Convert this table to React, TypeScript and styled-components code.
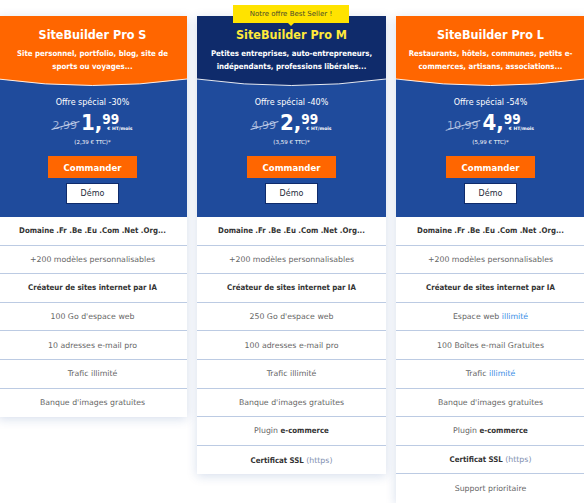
import styled, { createGlobalStyle } from 'styled-components';

const GlobalStyle = createGlobalStyle`
	html, body {
		margin: 0;
		padding: 0;
		background: #ffffff;
		font-family: "DejaVu Sans", "Noto Sans", sans-serif;
		overflow: hidden;
	}
`;

const ORANGE = '#ff6600';
const BLUE = '#1f4b9c';
const NAVY = '#0f2b6b';
// police grasse plus étroite, pour se rapprocher des largeurs de l'original
const BOLD_FONT = '"DejaVu Sans Condensed", "DejaVu Sans", sans-serif';

type Feature = { parts: { text: string; kind?: 'bold' | 'blue' | 'soft' }[]; bold?: boolean };

type Plan = {
	name: string;
	desc: string;
	offer: string;
	oldPrice: string;
	euros: string;
	cents: string;
	ttc: string;
	featured?: boolean;
	features: Feature[];
};

const common: Feature[] = [
	{ parts: [{ text: 'Domaine .Fr .Be .Eu .Com .Net .Org...' }], bold: true },
	{ parts: [{ text: '+200 modèles personnalisables' }] },
	{ parts: [{ text: 'Créateur de sites internet par IA' }], bold: true },
];

const plans: Plan[] = [
	{
		name: 'SiteBuilder Pro S',
		desc: 'Site personnel, portfolio, blog, site de sports ou voyages...',
		offer: 'Offre spécial -30%',
		oldPrice: '2,99',
		euros: '1,',
		cents: '99',
		ttc: '(2,39 € TTC)*',
		features: [
			...common,
			{ parts: [{ text: "100 Go d'espace web" }] },
			{ parts: [{ text: '10 adresses e-mail pro' }] },
			{ parts: [{ text: 'Trafic illimité' }] },
			{ parts: [{ text: "Banque d'images gratuites" }] },
		],
	},
	{
		name: 'SiteBuilder Pro M',
		desc: 'Petites entreprises, auto-entrepreneurs, indépendants, professions libérales...',
		offer: 'Offre spécial -40%',
		oldPrice: '4,99',
		euros: '2,',
		cents: '99',
		ttc: '(3,59 € TTC)*',
		featured: true,
		features: [
			...common,
			{ parts: [{ text: "250 Go d'espace web" }] },
			{ parts: [{ text: '100 adresses e-mail pro' }] },
			{ parts: [{ text: 'Trafic illimité' }] },
			{ parts: [{ text: "Banque d'images gratuites" }] },
			{ parts: [{ text: 'Plugin ' }, { text: 'e-commerce', kind: 'bold' }] },
			{ parts: [{ text: 'Certificat SSL', kind: 'bold' }, { text: ' (https)', kind: 'soft' }] },
		],
	},
	{
		name: 'SiteBuilder Pro L',
		desc: 'Restaurants, hôtels, communes, petits e-commerces, artisans, associations...',
		offer: 'Offre spécial -54%',
		oldPrice: '10,99',
		euros: '4,',
		cents: '99',
		ttc: '(5,99 € TTC)*',
		features: [
			...common,
			{ parts: [{ text: 'Espace web ' }, { text: 'illimité', kind: 'blue' }] },
			{ parts: [{ text: '100 Boîtes e-mail Gratuites' }] },
			{ parts: [{ text: 'Trafic ' }, { text: 'illimité', kind: 'blue' }] },
			{ parts: [{ text: "Banque d'images gratuites" }] },
			{ parts: [{ text: 'Plugin ' }, { text: 'e-commerce', kind: 'bold' }] },
			{ parts: [{ text: 'Certificat SSL', kind: 'bold' }, { text: ' (https)', kind: 'soft' }] },
			{ parts: [{ text: 'Support prioritaire' }] },
		],
	},
];

function App() {
	return (
		<>
			<GlobalStyle />
			<Page>
				{plans.map((plan) => (
					<Card key={plan.name}>
						{plan.featured && <Badge>Notre offre Best Seller !</Badge>}
						<Header $featured={!!plan.featured}>
							<Title $featured={!!plan.featured}>{plan.name}</Title>
							<Desc>{plan.desc}</Desc>
						</Header>
						{/* bas du header en forme de vague */}
						<Wave viewBox="0 0 189 10" preserveAspectRatio="none">
							<path d="M0 0 L0 1 Q94.5 14 189 1 L189 0 Z" fill={plan.featured ? NAVY : ORANGE} />
							<path d="M0 1 Q94.5 14 189 1" fill="none" stroke="#ffffff" strokeWidth="0.9" />
						</Wave>
						<Body>
							<Offer>{plan.offer}</Offer>
							<PriceRow>
								<OldPrice>{plan.oldPrice}</OldPrice>
								<Euros>{plan.euros}</Euros>
								<PriceSide>
									<Cents>{plan.cents}</Cents>
									<Unit>€ HT/mois</Unit>
								</PriceSide>
							</PriceRow>
							<Ttc>{plan.ttc}</Ttc>
							<OrderButton>Commander</OrderButton>
							<DemoButton>Démo</DemoButton>
						</Body>
						<FeatureList>
							{plan.features.map((f, i) => (
								<FeatureRow key={`${plan.name}-${i}`} $bold={!!f.bold}>
									{f.parts.map((p, j) => (
										<Part key={j} $kind={p.kind}>
											{p.text}
										</Part>
									))}
								</FeatureRow>
							))}
						</FeatureList>
					</Card>
				))}
			</Page>
		</>
	);
}

const Page = styled.div`
	display: flex;
	align-items: flex-start;
	gap: 10px;
	margin-left: -2px;
	padding-top: 16px;
	width: 600px;
`;

const Card = styled.div`
	position: relative;
	display: flex;
	flex-direction: column;
	width: 189px;
	flex-shrink: 0;
	background: #ffffff;
	box-shadow: 0 2px 10px rgba(30, 70, 150, 0.18);
`;

const Badge = styled.div`
	position: absolute;
	top: -11px;
	left: 36px;
	width: 116px;
	height: 18px;
	display: flex;
	align-items: center;
	justify-content: center;
	background: #ffe300;
	color: #4a4a2a;
	font-size: 7px;
	z-index: 2;

	&::after {
		content: '';
		position: absolute;
		bottom: -3px;
		left: 50%;
		margin-left: -3px;
		border-left: 3px solid transparent;
		border-right: 3px solid transparent;
		border-top: 3px solid #ffe300;
	}
`;

const Header = styled.div<{ $featured: boolean }>`
	height: 62px;
	box-sizing: border-box;
	padding: 11px 10px 0;
	text-align: center;
	color: #ffffff;
	background: ${({ $featured }) => ($featured ? NAVY : ORANGE)};
`;

const Title = styled.div<{ $featured: boolean }>`
	font-family: ${BOLD_FONT};
	font-size: 12.5px;
	font-weight: 700;
	line-height: 16px;
	color: ${({ $featured }) => ($featured ? '#ffe93a' : '#ffffff')};
`;

const Desc = styled.div`
	margin-top: 4px;
	font-family: ${BOLD_FONT};
	font-size: 7.8px;
	font-weight: 700;
	line-height: 13px;
`;

const Wave = styled.svg`
	display: block;
	width: 100%;
	height: 10px;
	background: ${BLUE};
`;

const Body = styled.div`
	display: flex;
	flex-direction: column;
	align-items: center;
	height: 129px;
	box-sizing: border-box;
	padding-top: 10px;
	background: ${BLUE};
	color: #ffffff;
`;

const Offer = styled.div`
	font-size: 8px;
	line-height: 10px;
`;

const PriceRow = styled.div`
	display: flex;
	align-items: flex-start;
	margin-top: 4px;
	height: 22px;
`;

const OldPrice = styled.span`
	position: relative;
	align-self: center;
	margin-right: 4px;
	margin-top: 4px;
	font-size: 11px;
	color: #9fb2d8;

	&::after {
		content: '';
		position: absolute;
		left: -2px;
		right: -2px;
		top: 50%;
		height: 1px;
		background: #c8d4ec;
		transform: rotate(-16deg);
	}
`;

const Euros = styled.span`
	font-family: ${BOLD_FONT};
	font-size: 22px;
	font-weight: 700;
	line-height: 22px;
`;

const PriceSide = styled.div`
	display: flex;
	flex-direction: column;
	align-items: flex-start;
`;

const Cents = styled.span`
	font-family: ${BOLD_FONT};
	font-size: 13.5px;
	font-weight: 700;
	line-height: 14px;
`;

const Unit = styled.span`
	margin-left: 5px;
	font-size: 4.5px;
	font-weight: 700;
	line-height: 6px;
`;

const Ttc = styled.div`
	margin-top: 4px;
	font-size: 5.5px;
	line-height: 8px;
`;

const OrderButton = styled.div`
	display: flex;
	align-items: center;
	justify-content: center;
	margin-top: 10px;
	width: 89px;
	height: 22px;
	background: ${ORANGE};
	font-family: ${BOLD_FONT};
	font-size: 9.5px;
	font-weight: 700;
`;

const DemoButton = styled.div`
	display: flex;
	align-items: center;
	justify-content: center;
	margin-top: 5px;
	width: 51px;
	height: 19px;
	background: #ffffff;
	border: 1px solid ${NAVY};
	color: #222a3a;
	font-size: 8px;
`;

const FeatureList = styled.div`
	display: flex;
	flex-direction: column;
`;

const FeatureRow = styled.div<{ $bold: boolean }>`
	display: flex;
	align-items: center;
	justify-content: center;
	box-sizing: border-box;
	height: 28.6px;
	border-bottom: 1px solid #bccbe3;
	font-family: ${({ $bold }) => ($bold ? BOLD_FONT : 'inherit')};
	font-size: 7.8px;
	font-weight: ${({ $bold }) => ($bold ? 700 : 400)};
	color: ${({ $bold }) => ($bold ? '#333333' : '#666666')};
	white-space: pre;

	&:last-child {
		border-bottom: none;
	}
`;

const Part = styled.span<{ $kind?: 'bold' | 'blue' | 'soft' }>`
	font-family: ${({ $kind }) => ($kind === 'bold' ? BOLD_FONT : 'inherit')};
	font-weight: ${({ $kind }) => ($kind === 'bold' ? 700 : 'inherit')};
	color: ${({ $kind }) =>
		$kind === 'bold' ? '#333333' : $kind === 'blue' ? '#3a8ee6' : $kind === 'soft' ? '#7f8fb0' : 'inherit'};
`;

export default App;
